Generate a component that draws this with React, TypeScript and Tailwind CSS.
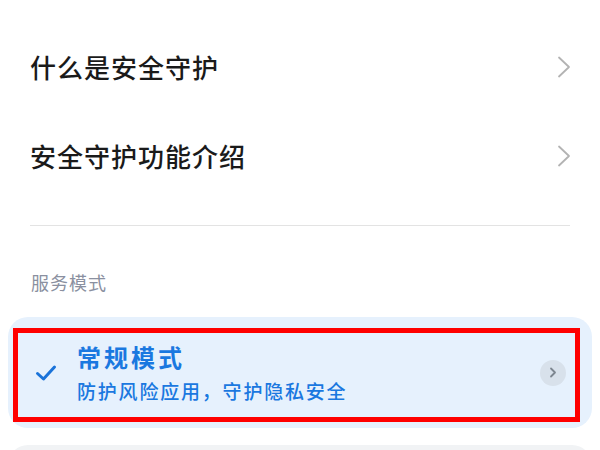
import React from "react";

const font = {
  fontFamily: '"Noto Sans CJK SC", "Noto Sans", sans-serif',
};

function Chevron() {
  return (
    <svg width="14" height="22" viewBox="0 0 14 22" fill="none">
      <path d="M2 1.5 L12 11 L2 20.5" stroke="#b3b3b3" strokeWidth="1.8" strokeLinecap="round" strokeLinejoin="round" />
    </svg>
  );
}

function Row({ text }: { text: string }) {
  return (
    <div className="h-[89px] pl-[30px] pr-[29px] flex items-center justify-between">
      <span className="text-[26px] leading-[34px] font-medium text-[#1a1a1a] tracking-[1px]">{text}</span>
      <Chevron />
    </div>
  );
}

export default function App() {
  return (
    <div className="w-[600px] h-[450px] overflow-hidden bg-white flex flex-col" style={font}>
      <div className="pt-[22px]">
        <Row text="什么是安全守护" />
        <Row text="安全守护功能介绍" />
      </div>
      <div className="mt-[25px] mx-[30px] h-px shrink-0 bg-[#e3e3e3]" />
      <div className="mt-[43px] pl-[31px] text-[18px] leading-[27px] text-[#8a90a0] tracking-[1px]">服务模式</div>
      <div className="mt-[21px] mx-[8px] h-[111px] shrink-0 rounded-[20px] bg-[#e6f1fd] relative flex items-center pl-[27px] pr-[26px]">
        <svg width="22" height="18" viewBox="0 0 22 18" fill="none" className="shrink-0">
          <path d="M2.5 9.5 L8.5 15 L19.5 3" stroke="#1a73d9" strokeWidth="3" strokeLinecap="round" strokeLinejoin="round" />
        </svg>
        <div className="ml-[20px] flex-1 flex flex-col">
          <span className="text-[24px] leading-[32px] font-bold text-[#1a78e0] tracking-[3px]">常规模式</span>
          <span className="mt-[5px] text-[19px] leading-[26px] font-medium text-[#1a78e0] tracking-[1.8px]">防护风险应用，守护隐私安全</span>
        </div>
        <div className="w-[26px] h-[26px] rounded-full bg-[#d8e1eb] flex items-center justify-center shrink-0">
          <svg width="8" height="11" viewBox="0 0 8 11" fill="none">
            <path d="M2 1.5 L6 5.5 L2 9.5" stroke="#7d8690" strokeWidth="1.8" strokeLinecap="round" strokeLinejoin="round" />
          </svg>
        </div>
        <div className="absolute left-[5px] top-[11px] right-[12px] bottom-[6px] border-[5px] border-[#ff0000] pointer-events-none" />
      </div>
      <div className="mt-[17px] mx-[8px] h-[40px] shrink-0 rounded-t-[20px] bg-[#f1f3f5]" />
    </div>
  );
}
